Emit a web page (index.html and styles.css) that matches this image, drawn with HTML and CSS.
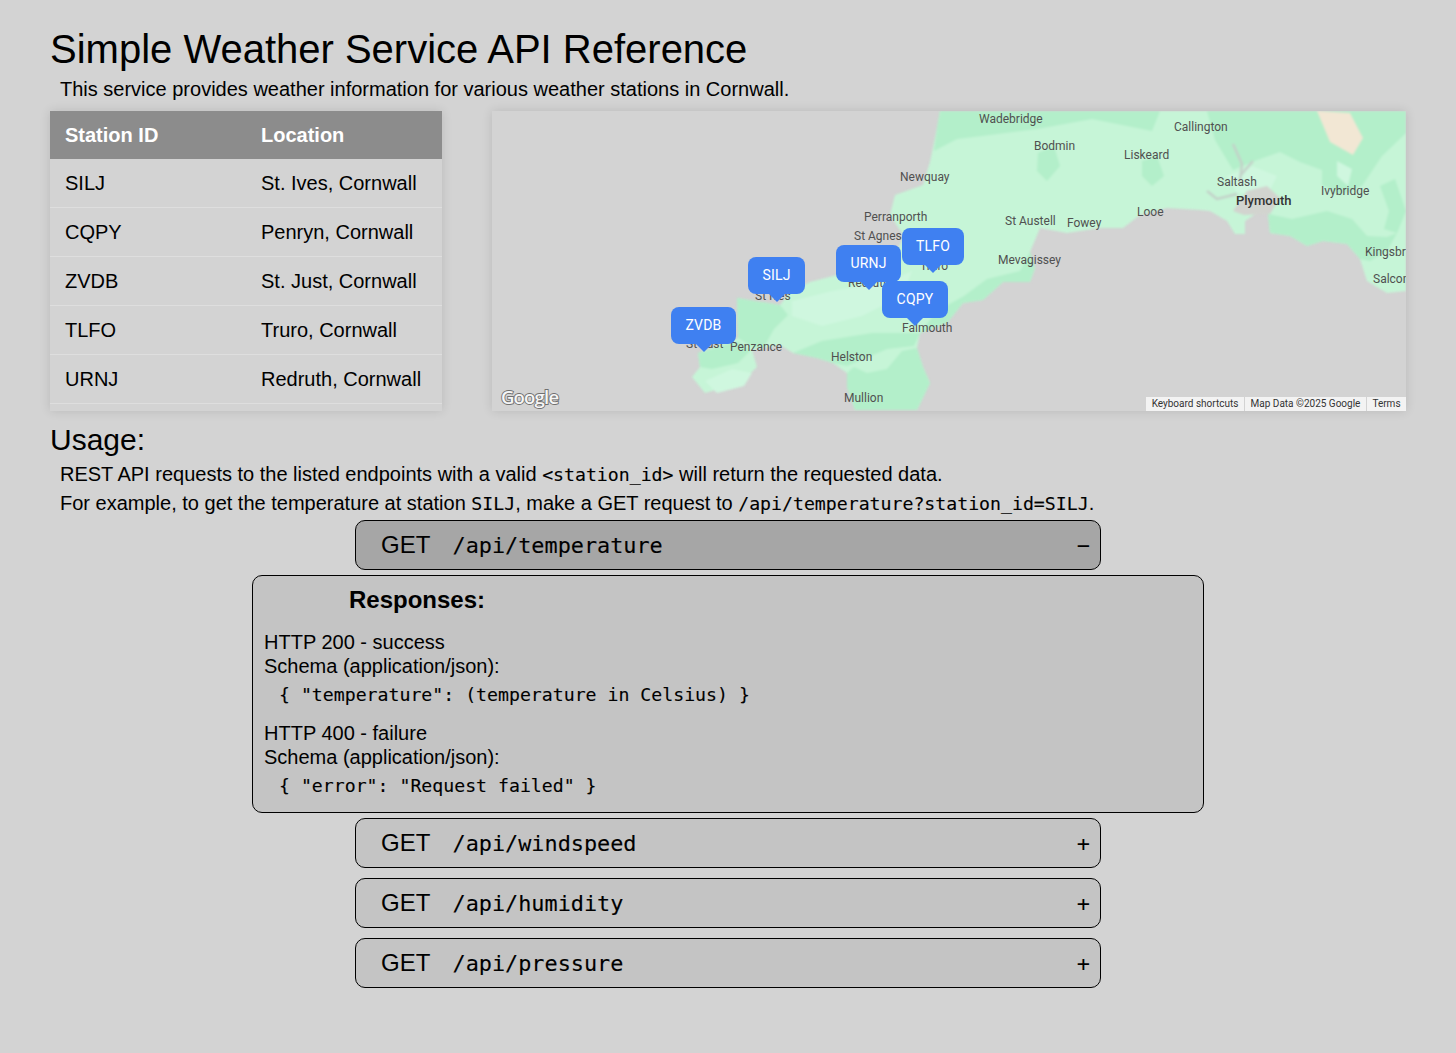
FILE: index.html
```html
<!DOCTYPE html>
<html lang="en">
<head>
  <meta charset="UTF-8" />
  <meta name="viewport" content="width=device-width, initial-scale=1" />
  <title>Simple Weather Service API Reference</title>
  <link rel="stylesheet" href="styles.css">
</head>
<body>

  <h1>Simple Weather Service API Reference</h1>
  <p class="intro">This service provides weather information for various weather stations in Cornwall.</p>

  <div class="top">
    <div class="stations">
      <table>
        <thead>
          <tr><th>Station ID</th><th>Location</th></tr>
        </thead>
        <tbody>
          <tr><td>SILJ</td><td>St. Ives, Cornwall</td></tr>
          <tr><td>CQPY</td><td>Penryn, Cornwall</td></tr>
          <tr><td>ZVDB</td><td>St. Just, Cornwall</td></tr>
          <tr><td>TLFO</td><td>Truro, Cornwall</td></tr>
          <tr><td>URNJ</td><td>Redruth, Cornwall</td></tr>
        </tbody>
      </table>
    </div>

    <div class="map">
      <!-- viewBox is the map box itself, 914x300 -->
      <svg class="map-svg" viewBox="0 0 914 300" width="914" height="300">
        <g class="terrain">
          <path class="land" d="M448 0L445 17L438 51L431 74L403 84L398 104L412 125L400 150L345 164L318 171L298 181L288 194L245 187L246 227L206 242L208 256L200 266L213 282L248 272L265 256L260 239L288 234L301 242L325 247L341 252L355 262L355 276L363 299L425 299L438 272L431 256L425 237L428 222L455 212L471 192L491 189L511 171L538 171L543 157L538 141L548 117L575 122L608 117L631 117L648 104L675 97L708 99L718 100L735 110L743 123L753 123L753 110L765 102L776 103L778 122L798 125L815 135L831 130L855 133L868 148L875 170L895 182L914 180L914 0Z"/>
          <path class="land-dark" d="M245 187L288 194L296 204L282 218L272 236L262 237L246 227Z"/>
          <path class="land-dark" d="M206 242L246 230L258 240L246 252L220 258L208 256Z"/>
          <path class="land-dark" d="M355 262L362 256L375 262L395 258L410 240L425 237L431 256L438 272L425 299L363 299L355 276Z"/>
          <path class="land-dark" d="M301 242L330 230L380 222L428 222L422 235L395 238L355 255L341 252L325 247Z"/>
          <path class="land-dark" d="M428 222L455 212L471 192L491 189L511 171L538 171L543 157L538 141L528 160L495 168L472 185L445 200Z"/>
          <path class="land-dark" d="M448 0L445 17L442 40L465 28L490 25L545 18L600 8L660 20L668 0Z"/>
          <path class="land-dark" d="M715 0L914 0L914 22L890 45L870 75L848 84L830 74L830 59L808 51L788 41L765 49L741 59L723 29Z"/>
          <path class="land-dark" d="M888 75L903 68L914 100L905 122L892 118L897 100Z"/>
          <path class="land-dark" d="M776 103L800 108L835 100L860 108L875 125L895 126L905 122L895 140L878 150L868 148L855 133L831 130L815 135L798 125L778 122Z"/>
          <path class="land-dark" d="M546 42L562 35L568 55L555 70L545 60Z"/>
          <path class="land-dark" d="M650 50L665 45L672 65L660 75L650 65Z"/>
          <path class="land-light" d="M300 190L340 180L398 170L420 160L410 185L370 205L330 215L300 205Z"/>
          <path class="land-light" d="M213 270L240 258L260 262L252 275L225 282Z"/>
          <path class="land-light" d="M735 65L760 55L785 65L775 85L745 82Z"/>
          <path class="land-light" d="M845 50L860 58L856 75L845 65Z"/>
          <path class="land-sand" d="M825 0L858 2L871 27L861 44L838 31Z"/>
          <path class="land-urban" d="M741 100L755 80L775 75L788 87L778 103L752 104Z"/>
          <path class="river" d="M741 33L750 53L748 70M761 50L748 65M715 80L725 88L745 83"/>
        </g>

        <text class="place" x="487" y="12">Wadebridge</text>
        <text class="place" x="542" y="39">Bodmin</text>
        <text class="place" x="682" y="20">Callington</text>
        <text class="place" x="632" y="48">Liskeard</text>
        <text class="place" x="408" y="70">Newquay</text>
        <text class="place" x="725" y="75">Saltash</text>
        <text class="place place-big" x="744" y="94">Plymouth</text>
        <text class="place" x="829" y="84">Ivybridge</text>
        <text class="place" x="372" y="110">Perranporth</text>
        <text class="place" x="362" y="129">St Agnes</text>
        <text class="place" x="513" y="114">St Austell</text>
        <text class="place" x="575" y="116">Fowey</text>
        <text class="place" x="645" y="105">Looe</text>
        <text class="place" x="506" y="153">Mevagissey</text>
        <text class="place" x="873" y="145">Kingsbridge</text>
        <text class="place" x="881" y="172">Salcombe</text>
        <text class="place" x="428" y="159">Truro</text>
        <text class="place" x="356" y="176">Redruth</text>
        <text class="place" x="263" y="189">St Ives</text>
        <text class="place" x="194" y="237">St Just</text>
        <text class="place" x="238" y="240">Penzance</text>
        <text class="place" x="410" y="221">Falmouth</text>
        <text class="place" x="339" y="250">Helston</text>
        <text class="place" x="352" y="291">Mullion</text>
        <text class="google" x="9" y="293">Google</text>
      </svg>

      <div class="pin pin-silj">SILJ</div>
      <div class="pin pin-urnj">URNJ</div>
      <div class="pin pin-tlfo">TLFO</div>
      <div class="pin pin-cqpy">CQPY</div>
      <div class="pin pin-zvdb">ZVDB</div>

      <div class="attribution">
        <span class="attr-item attr-keys">Keyboard shortcuts</span>
        <span class="attr-item attr-data">Map Data ©2025 Google</span>
        <span class="attr-item attr-terms">Terms</span>
      </div>
    </div>
  </div>

  <h2>Usage:</h2>
  <p class="usage">REST API requests to the listed endpoints with a valid <code>&lt;station_id&gt;</code> will return the requested data.</p>
  <p class="usage">For example, to get the temperature at station <code>SILJ</code>, make a GET request to <code>/api/temperature?station_id=SILJ</code>.</p>

  <div class="endpoints">
    <div class="endpoint endpoint-open">
      <span class="method">GET</span>
      <code class="path">/api/temperature</code>
      <span class="toggle">−</span>
    </div>

    <div class="responses">
      <h3>Responses:</h3>
      <div class="response">
        <div>HTTP 200 - success</div>
        <div>Schema (application/json):</div>
        <code class="schema">{ "temperature": (temperature in Celsius) }</code>
      </div>
      <div class="response">
        <div>HTTP 400 - failure</div>
        <div>Schema (application/json):</div>
        <code class="schema">{ "error": "Request failed" }</code>
      </div>
    </div>

    <div class="endpoint">
      <span class="method">GET</span>
      <code class="path">/api/windspeed</code>
      <span class="toggle">+</span>
    </div>
    <div class="endpoint">
      <span class="method">GET</span>
      <code class="path">/api/humidity</code>
      <span class="toggle">+</span>
    </div>
    <div class="endpoint">
      <span class="method">GET</span>
      <code class="path">/api/pressure</code>
      <span class="toggle">+</span>
    </div>
  </div>

</body>
</html>
```

FILE: styles.css
```css
body {
  margin: 0;
  padding: 26px 50px 0;
  background-color: #d3d3d3;
  color: #000;
  font-family: "Liberation Sans", Arial, sans-serif;
  font-size: 20px;
}

h1 {
  margin: 0;
  font-size: 40px;
  line-height: 46px;
  font-weight: normal;
}

.intro {
  margin: 6px 0 10px;
  padding-left: 10px;
  line-height: 23px;
}

code {
  font-family: "DejaVu Sans Mono", monospace;
  font-size: 18.2px;
  -webkit-text-stroke: 0.12px #000;
}

/* table + map */
.top {
  display: flex;
  gap: 50px;
  height: 300px;
}

.stations {
  width: 392px;
  box-shadow: 0 0 10px rgba(0, 0, 0, 0.12);
}

table {
  width: 100%;
  border-collapse: collapse;
  table-layout: fixed;
}

th, td {
  padding: 0 15px;
  text-align: left;
}

th:first-child, td:first-child {
  width: 166px;
}

th {
  height: 48px;
  background-color: #8c8c8c;
  color: #fff;
}

td {
  height: 48px;
  border-bottom: 1px solid #dedede;
}

.map {
  position: relative;
  width: 914px;
  height: 300px;
  overflow: hidden;
  box-shadow: 0 0 10px rgba(0, 0, 0, 0.12);
}

.map-svg {
  display: block;
}

.terrain {
  filter: blur(1px);
}

.land { fill: #c6f5d7; }
.land-dark { fill: #b3efca; }
.land-light { fill: #cff7df; }
.land-sand { fill: #f2e7d4; }
.land-urban { fill: #d2d4cf; }

.river {
  fill: none;
  stroke: #c3d2c9;
  stroke-width: 2.5px;
}

.place {
  font-family: Roboto, sans-serif;
  font-size: 12px;
  fill: #505050;
}

.place-big {
  font-size: 13px;
  font-weight: 500;
  fill: #333;
}

.google {
  font-family: "Open Sans", sans-serif;
  font-size: 18.5px;
  font-weight: 600;
  letter-spacing: -0.8px;
  fill: #f6f6f6;
  stroke: #707070;
  stroke-width: 1.8px;
  paint-order: stroke;
}

.pin {
  position: absolute;
  height: 37px;
  line-height: 37px;
  border-radius: 8px;
  background-color: #3f80f1;
  color: #fff;
  font-family: Roboto, sans-serif;
  font-size: 14px;
  letter-spacing: 0.2px;
  text-align: center;
}

.pin::after {
  content: "";
  position: absolute;
  top: 100%;
  left: 50%;
  margin-left: -8px;
  border-left: 8px solid transparent;
  border-right: 8px solid transparent;
  border-top: 8px solid #3f80f1;
}

.pin-silj { left: 256px; top: 146px; width: 57px; }
.pin-urnj { left: 344px; top: 134px; width: 65px; }
.pin-tlfo { left: 410px; top: 117px; width: 62px; }
.pin-cqpy { left: 390px; top: 170px; width: 66px; }
.pin-zvdb { left: 179px; top: 196px; width: 65px; }

.attribution {
  position: absolute;
  right: 0;
  bottom: 0;
  display: flex;
  gap: 1px;
  height: 14px;
  font-family: Roboto, sans-serif;
  font-size: 10px;
  line-height: 14px;
  color: #333;
}

.attr-item {
  background-color: #f3f3f3;
  text-align: center;
}

.attr-keys { width: 98px; }
.attr-data { width: 121px; }
.attr-terms { width: 39px; }

/* usage text */
h2 {
  margin: 12px 0 3px;
  font-size: 30px;
  line-height: 34px;
  font-weight: normal;
}

.usage {
  margin: 0;
  padding-left: 10px;
  line-height: 29px;
}

/* endpoints */
.endpoints {
  display: flex;
  flex-direction: column;
  align-items: center;
  margin-top: 2px;
}

.endpoint {
  display: flex;
  align-items: center;
  box-sizing: border-box;
  width: 746px;
  height: 50px;
  margin-bottom: 10px;
  padding: 0 10px 0 25px;
  border: 1px solid #000;
  border-radius: 10px;
  background-color: #c4c4c4;
}

.method {
  width: 71.5px;
  font-size: 24px;
}

.path {
  flex: 1;
  font-size: 21.84px;
}

.toggle {
  font-family: "DejaVu Sans Mono", monospace;
  font-size: 22px;
}

.endpoint-open {
  margin-bottom: 5px;
  background-color: #a6a6a6;
}

.responses {
  box-sizing: border-box;
  width: 952px;
  height: 238px;
  margin-bottom: 5px;
  padding: 0 11px;
  border: 1px solid #000;
  border-radius: 10px;
  background-color: #c4c4c4;
  line-height: 24px;
}

.responses h3 {
  margin: 10px 0 16px 85px;
  font-size: 24px;
  line-height: 28px;
}

.response {
  margin-bottom: 9px;
}

.schema {
  display: block;
  padding-left: 15px;
  line-height: 34px;
}
```
